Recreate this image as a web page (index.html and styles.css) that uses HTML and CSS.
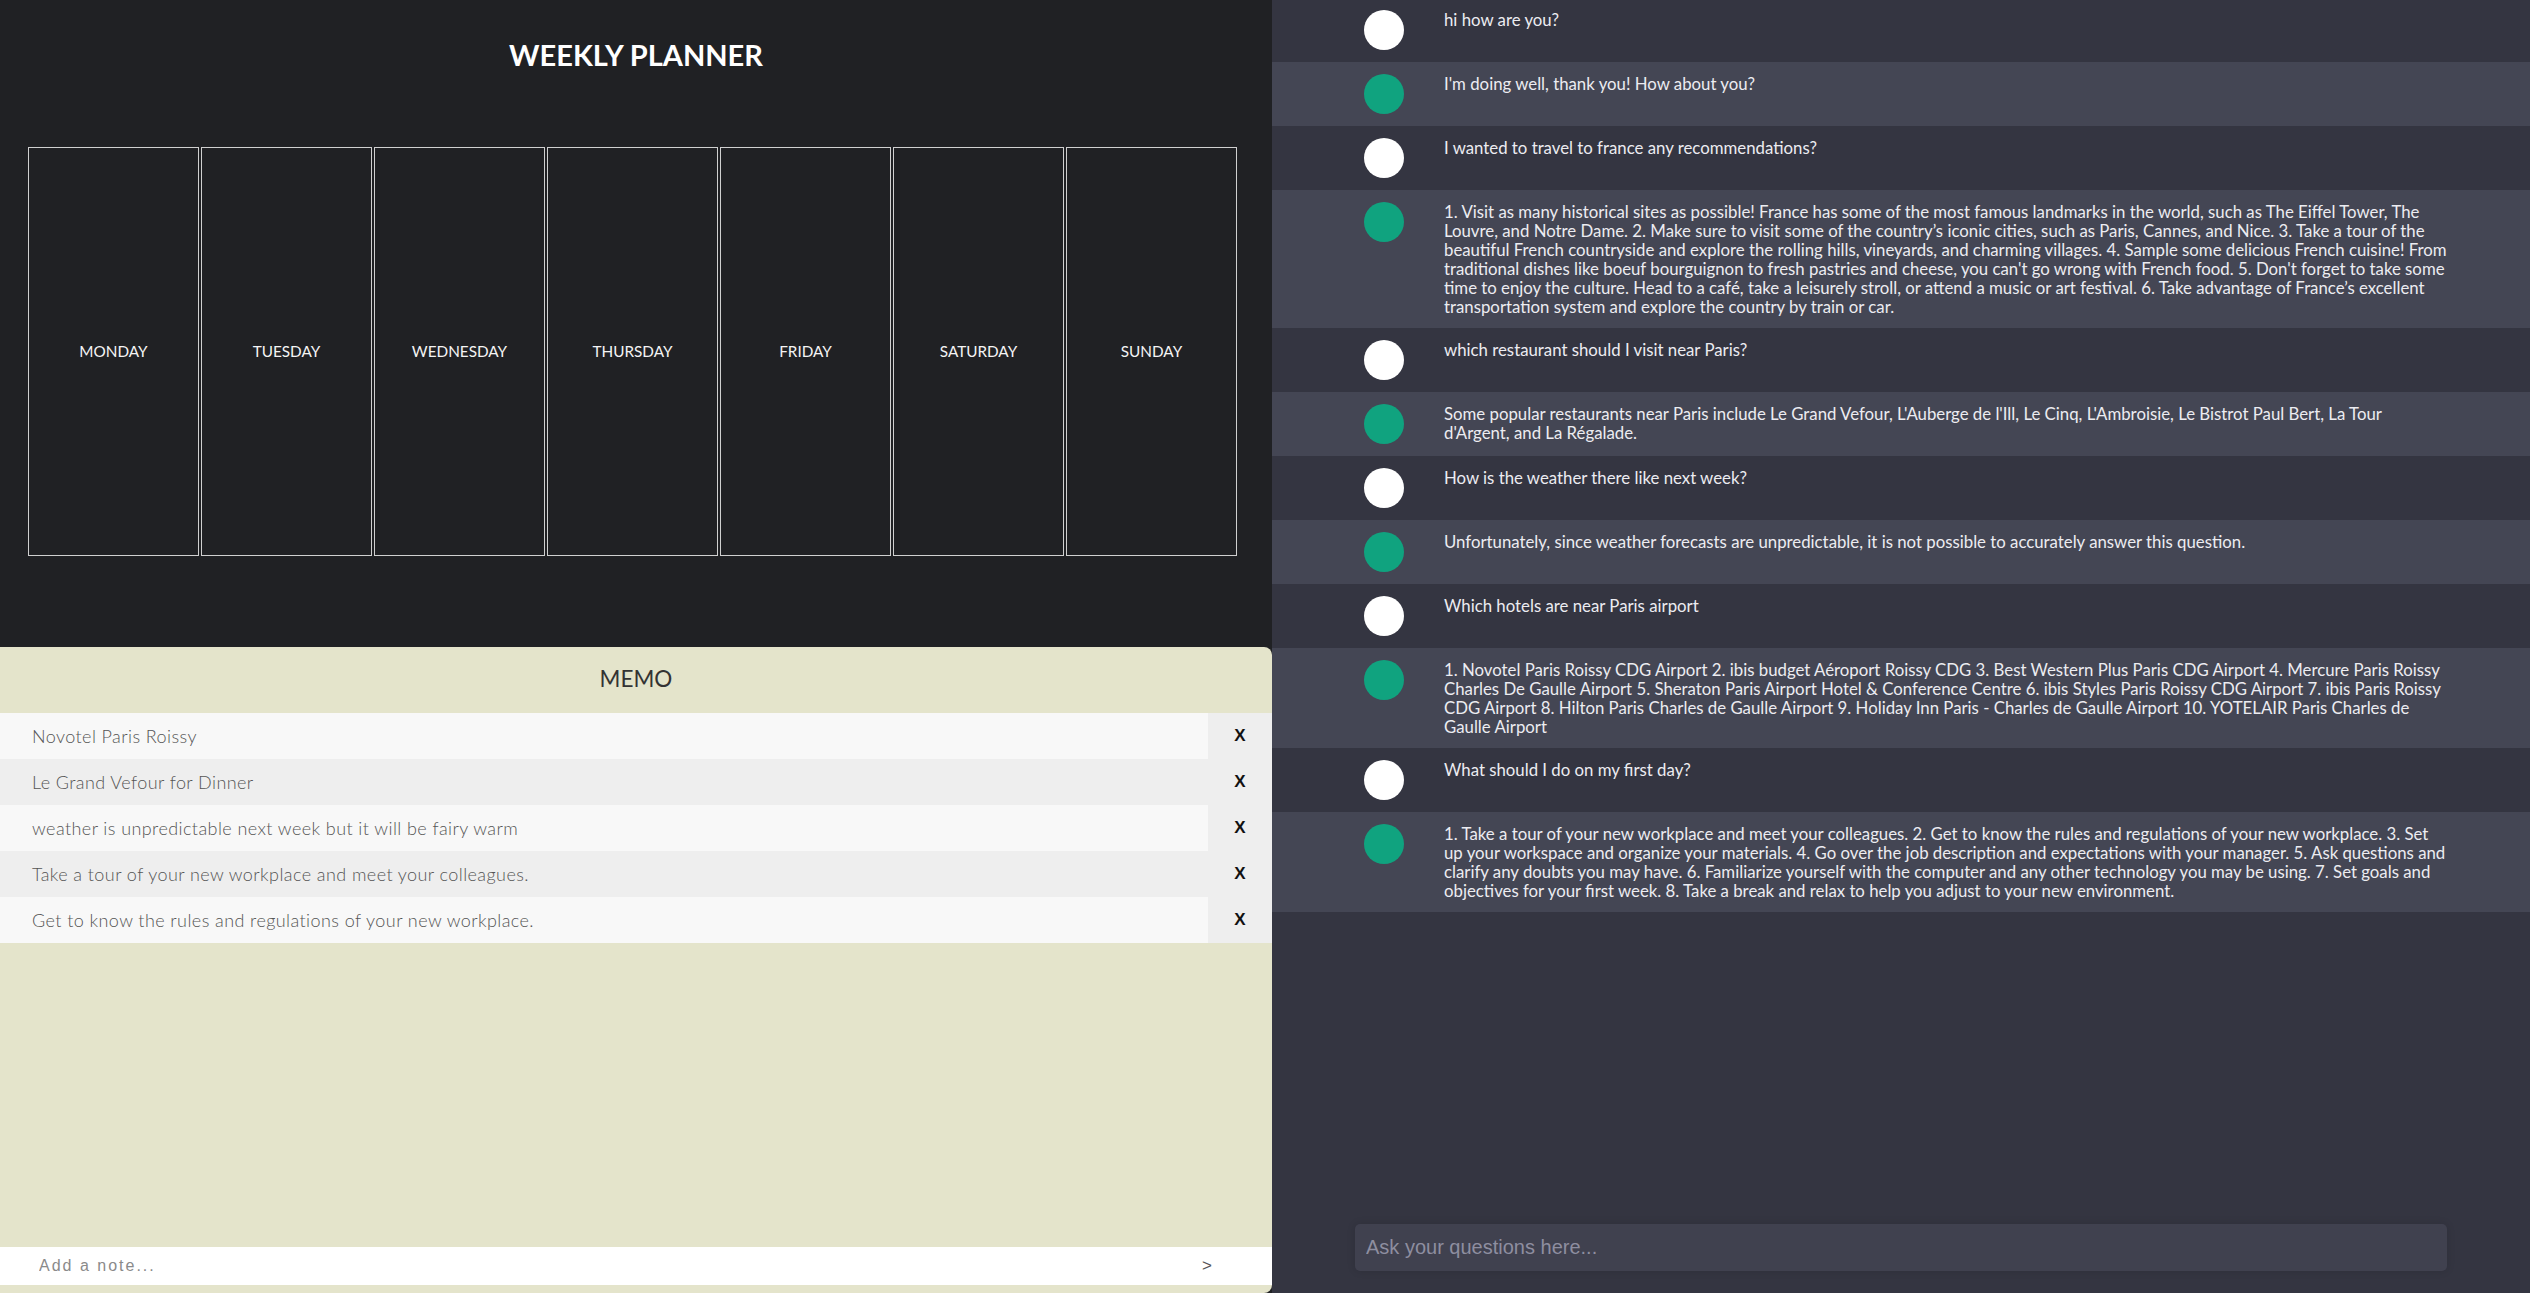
FILE: index.html
```html
<!DOCTYPE html>
<html lang="en">
<head>
<meta charset="utf-8">
<title>Weekly Planner</title>
<link rel="stylesheet" href="styles.css">
</head>
<body>
<div class="app">
  <section class="left">
    <div class="planner">
      <h1 class="planner-title">WEEKLY PLANNER</h1>
      <div class="days">
        <div class="day">MONDAY</div>
        <div class="day">TUESDAY</div>
        <div class="day">WEDNESDAY</div>
        <div class="day">THURSDAY</div>
        <div class="day">FRIDAY</div>
        <div class="day">SATURDAY</div>
        <div class="day">SUNDAY</div>
      </div>
    </div>
    <div class="memo">
      <h2 class="memo-title">MEMO</h2>
      <ul class="memo-list">
        <li class="memo-item"><span class="memo-text">Novotel Paris Roissy</span><button class="memo-del">X</button></li>
        <li class="memo-item"><span class="memo-text">Le Grand Vefour for Dinner</span><button class="memo-del">X</button></li>
        <li class="memo-item"><span class="memo-text">weather is unpredictable next week but it will be fairy warm</span><button class="memo-del">X</button></li>
        <li class="memo-item"><span class="memo-text">Take a tour of your new workplace and meet your colleagues.</span><button class="memo-del">X</button></li>
        <li class="memo-item"><span class="memo-text">Get to know the rules and regulations of your new workplace.</span><button class="memo-del">X</button></li>
      </ul>
      <form class="memo-form">
        <input class="memo-input" type="text" placeholder="Add a note...">
        <button class="memo-add" type="button">&gt;</button>
      </form>
    </div>
  </section>
  <section class="chat">
    <div class="messages">
      <div class="msg user"><div class="msg-inner"><div class="avatar"></div><div class="msg-text">hi how are you?</div></div></div>
      <div class="msg bot"><div class="msg-inner"><div class="avatar"></div><div class="msg-text">I'm doing well, thank you! How about you?</div></div></div>
      <div class="msg user"><div class="msg-inner"><div class="avatar"></div><div class="msg-text">I wanted to travel to france any recommendations?</div></div></div>
      <div class="msg bot"><div class="msg-inner"><div class="avatar"></div><div class="msg-text">1. Visit as many historical sites as possible! France has some of the most famous landmarks in the world, such as The Eiffel Tower, The Louvre, and Notre Dame. 2. Make sure to visit some of the country’s iconic cities, such as Paris, Cannes, and Nice. 3. Take a tour of the beautiful French countryside and explore the rolling hills, vineyards, and charming villages. 4. Sample some delicious French cuisine! From traditional dishes like boeuf bourguignon to fresh pastries and cheese, you can't go wrong with French food. 5. Don't forget to take some time to enjoy the culture. Head to a café, take a leisurely stroll, or attend a music or art festival. 6. Take advantage of France’s excellent transportation system and explore the country by train or car.</div></div></div>
      <div class="msg user"><div class="msg-inner"><div class="avatar"></div><div class="msg-text">which restaurant should I visit near Paris?</div></div></div>
      <div class="msg bot"><div class="msg-inner"><div class="avatar"></div><div class="msg-text">Some popular restaurants near Paris include Le Grand Vefour, L'Auberge de l'Ill, Le Cinq, L'Ambroisie, Le Bistrot Paul Bert, La Tour d'Argent, and La Régalade.</div></div></div>
      <div class="msg user"><div class="msg-inner"><div class="avatar"></div><div class="msg-text">How is the weather there like next week?</div></div></div>
      <div class="msg bot"><div class="msg-inner"><div class="avatar"></div><div class="msg-text">Unfortunately, since weather forecasts are unpredictable, it is not possible to accurately answer this question.</div></div></div>
      <div class="msg user"><div class="msg-inner"><div class="avatar"></div><div class="msg-text">Which hotels are near Paris airport</div></div></div>
      <div class="msg bot"><div class="msg-inner"><div class="avatar"></div><div class="msg-text">1. Novotel Paris Roissy CDG Airport 2. ibis budget Aéroport Roissy CDG 3. Best Western Plus Paris CDG Airport 4. Mercure Paris Roissy Charles De Gaulle Airport 5. Sheraton Paris Airport Hotel &amp; Conference Centre 6. ibis Styles Paris Roissy CDG Airport 7. ibis Paris Roissy CDG Airport 8. Hilton Paris Charles de Gaulle Airport 9. Holiday Inn Paris - Charles de Gaulle Airport 10. YOTELAIR Paris Charles de Gaulle Airport</div></div></div>
      <div class="msg user"><div class="msg-inner"><div class="avatar"></div><div class="msg-text">What should I do on my first day?</div></div></div>
      <div class="msg bot"><div class="msg-inner"><div class="avatar"></div><div class="msg-text">1. Take a tour of your new workplace and meet your colleagues. 2. Get to know the rules and regulations of your new workplace. 3. Set up your workspace and organize your materials. 4. Go over the job description and expectations with your manager. 5. Ask questions and clarify any doubts you may have. 6. Familiarize yourself with the computer and any other technology you may be using. 7. Set goals and objectives for your first week. 8. Take a break and relax to help you adjust to your new environment.</div></div></div>
    </div>
    <form class="ask-form">
      <input class="ask-input" type="text" placeholder="Ask your questions here...">
    </form>
  </section>
</div>
</body>
</html>
```
FILE: styles.css
```css
* { box-sizing: border-box; }
html, body { margin: 0; padding: 0; height: 100%; }
body {
  font-family: Lato, "Noto Sans", sans-serif;
  background: #343541;
  overflow: hidden;
}
.app {
  display: grid;
  grid-template-columns: 1272px 1fr;
  height: 1293px;
}

/* ---------- left ---------- */
.left {
  display: flex;
  flex-direction: column;
  background: #202124;
  height: 1293px;
}
.planner {
  height: 647px;
  display: flex;
  flex-direction: column;
}
.planner-title {
  margin: 38px 0 0;
  text-align: center;
  color: #ffffff;
  font-size: 29px;
  line-height: 34px;
  font-weight: 700;
}
.days {
  display: flex;
  gap: 2px;
  margin: 75px 0 0 28px;
}
.day {
  width: 171px;
  height: 409px;
  border: 1px solid #d0d0d0;
  display: flex;
  align-items: center;
  justify-content: center;
  color: #f4f4f4;
  font-size: 15.3px;
  padding-bottom: 2px;
}

.memo {
  flex: 1;
  display: flex;
  flex-direction: column;
  background: #e4e4cb;
  border-radius: 0 8px 8px 0;
  overflow: hidden;
}
.memo-title {
  margin: 0;
  height: 66px;
  padding-top: 16px;
  text-align: center;
  font-size: 22.5px;
  line-height: 31px;
  font-weight: 400;
  color: #333333;
}
.memo-list {
  list-style: none;
  margin: 0;
  padding: 0;
  flex: 1;
}
.memo-item {
  display: flex;
  height: 46px;
}
.memo-text {
  flex: 1;
  display: flex;
  align-items: center;
  padding-left: 32px;
  background: #f8f8f8;
  color: #555555;
  font-size: 18px;
  font-weight: 300;
  letter-spacing: 0.42px;
}
.memo-item:nth-child(even) .memo-text { background: #eeeeee; }
.memo-del {
  width: 64px;
  border: 0;
  background: #eeeeee;
  color: #111111;
  font-family: "Liberation Sans", Arial, sans-serif;
  font-size: 17px;
  font-weight: 700;
  padding: 0;
  cursor: pointer;
}
.memo-form {
  display: flex;
  height: 38px;
  margin: 0 0 8px;
  background: #ffffff;
}
.memo-input {
  flex: 1;
  border: 0;
  outline: 0;
  background: transparent;
  padding: 0 0 0 39px;
  font-family: "Liberation Sans", Arial, sans-serif;
  font-size: 16px;
  letter-spacing: 2px;
  color: #333;
}
.memo-input::placeholder { color: #8a8a8a; }
.memo-add {
  width: 80px;
  border: 0;
  background: transparent;
  padding: 0 14px 0 0;
  font-family: "Liberation Sans", Arial, sans-serif;
  font-size: 17px;
  color: #555;
  text-align: left;
  text-indent: 10px;
}

/* ---------- chat ---------- */
.chat {
  display: flex;
  flex-direction: column;
  height: 1293px;
  background: #343541;
}
.messages {
  flex: 1;
  overflow: hidden;
  margin-top: -2px;
}
.msg { padding: 12px 0; }
.msg.user { background: #343541; }
.msg.bot { background: #444654; }
.msg-inner {
  width: 1092px;
  margin: 0 auto;
  display: flex;
  align-items: flex-start;
  gap: 40px;
  padding-left: 9px;
}
.avatar {
  flex: none;
  width: 40px;
  height: 40px;
  border-radius: 50%;
  background: #ffffff;
}
.msg.bot .avatar { background: #10a37f; }
.msg-text {
  flex: 1;
  color: #ececf1;
  font-size: 16.8px;
  line-height: 19px;
}
.ask-form {
  padding: 0 0 22px;
  display: flex;
  justify-content: center;
}
.ask-input {
  width: 1092px;
  height: 47px;
  border: 0;
  outline: 0;
  border-radius: 5px;
  background: #40414f;
  box-shadow: 0 0 8px rgba(0,0,0,0.12);
  padding: 0 11px;
  font-family: "Liberation Sans", Arial, sans-serif;
  font-size: 20px;
  color: #ececf1;
}
.ask-input::placeholder { color: #8e8ea0; }
```
